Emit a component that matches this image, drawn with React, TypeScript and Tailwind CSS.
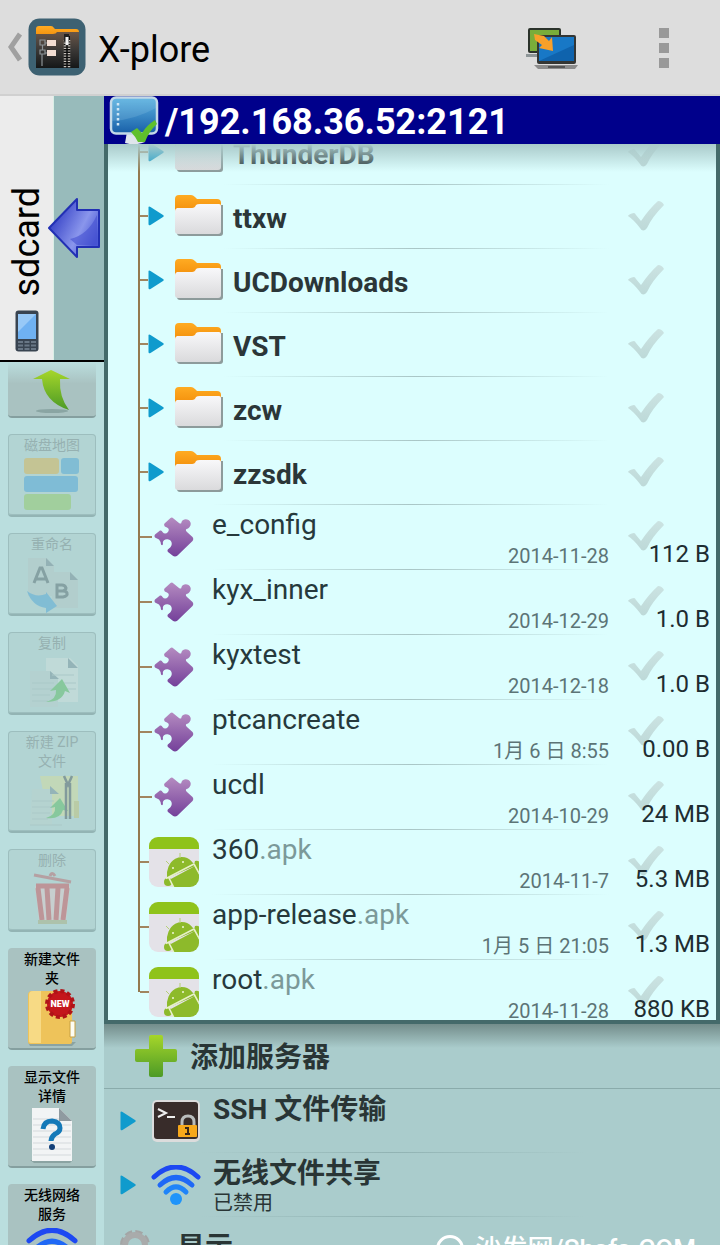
import type { ReactNode } from 'react'

interface Folder {
  name: string
}

interface FileItem {
  name: string
  ext?: string
  date: string
  size: string
}

interface Tool {
  label: string
  icon: ReactNode
  disabled?: boolean
}

const folders: Folder[] = [
  { name: 'ThunderDB' },
  { name: 'ttxw' },
  { name: 'UCDownloads' },
  { name: 'VST' },
  { name: 'zcw' },
  { name: 'zzsdk' },
]

const files: FileItem[] = [
  { name: 'e_config', date: '2014-11-28', size: '112 B' },
  { name: 'kyx_inner', date: '2014-12-29', size: '1.0 B' },
  { name: 'kyxtest', date: '2014-12-18', size: '1.0 B' },
  { name: 'ptcancreate', date: '1月 6 日 8:55', size: '0.00 B' },
  { name: 'ucdl', date: '2014-10-29', size: '24 MB' },
  { name: '360', ext: '.apk', date: '2014-11-7', size: '5.3 MB' },
  { name: 'app-release', ext: '.apk', date: '1月 5 日 21:05', size: '1.3 MB' },
  { name: 'root', ext: '.apk', date: '2014-11-28', size: '880 KB' },
]

/* ---------- icons ---------- */

// gradients shared by the icons that repeat in the lists
const Gradients = () => (
  <svg className="absolute size-0" aria-hidden="true">
    <defs>
      <linearGradient id="orange" x1="0" y1="0" x2="0" y2="1">
        <stop offset="0" stopColor="#ffab22" />
        <stop offset="1" stopColor="#f28d0a" />
      </linearGradient>
      <linearGradient id="paper" x1="0" y1="0" x2="0" y2="1">
        <stop offset="0" stopColor="#f8f8fa" />
        <stop offset="1" stopColor="#dadadc" />
      </linearGradient>
      <linearGradient id="purple" x1="0" y1="0" x2="0" y2="1">
        <stop offset="0" stopColor="#b48bc0" />
        <stop offset="1" stopColor="#74409a" />
      </linearGradient>
      <linearGradient id="lime" x1="0" y1="0" x2="0" y2="1">
        <stop offset="0" stopColor="#a6d62a" />
        <stop offset="1" stopColor="#4c9a26" />
      </linearGradient>
      <linearGradient id="screen" x1="0" y1="0" x2="0" y2="1">
        <stop offset="0" stopColor="#5db4e2" />
        <stop offset="1" stopColor="#185fa8" />
      </linearGradient>
      <linearGradient id="check" x1="0" y1="0" x2="0" y2="1">
        <stop offset="0" stopColor="#cbe3e2" />
        <stop offset="1" stopColor="#bdd9d8" />
      </linearGradient>
    </defs>
  </svg>
)

const AppIcon = () => (
  <svg className="size-[58px]" viewBox="0 0 58 58">
    <defs>
      <linearGradient id="appfolder" x1="0" y1="0" x2="0" y2="1">
        <stop offset="0" stopColor="#6a5648" />
        <stop offset="0.5" stopColor="#3a3836" />
        <stop offset="1" stopColor="#151718" />
      </linearGradient>
    </defs>
    <rect x="0.5" y="0.5" width="57" height="57" rx="11" fill="#3d6172" />
    <path d="M8 17V11q0-3 3-3h12q2 0 3 2l1 1h21q3 0 3 3v5H8z" fill="url(#orange)" />
    <path d="M8 16h17q3 0 4-2h22v36H8z" fill="url(#appfolder)" />
    <rect x="19" y="22" width="9" height="6" fill="#f2ddd2" />
    <rect x="19" y="32" width="9" height="6" fill="#f2ddd2" />
    <path d="M12 22h5v5h-5zM12 32h5v4h-5zM14.500 27v5M14 36v12M17 25h2M17 35h2" fill="none" stroke="#8b9295" strokeWidth="1.200" />
    <path d="M39 18v32" stroke="#0c0c0c" strokeWidth="6" />
    <path d="M37 22v28M41 22v28" stroke="#c9c4be" strokeWidth="2.500" strokeDasharray="1.200 1.400" />
    <path d="M36 16h5v7h-5z" fill="#222" />
    <path d="M37.500 19h3v8h-3z" fill="#f3f3f3" />
  </svg>
)

const SwapScreensIcon = () => (
  <svg className="h-[46px] w-14" viewBox="0 0 56 46">
    <path d="M1 30h20v3H1z" fill="#8e9698" />
    <rect x="3" y="4" width="33" height="25" rx="2" fill="#2b322b" />
    <rect x="5" y="6" width="29" height="21" fill="#79ad3a" />
    <rect x="12" y="11" width="39" height="29" rx="2" fill="#343634" />
    <rect x="14" y="13" width="35" height="24" fill="#1878c6" />
    <path d="M14 37l35-16v16z" fill="#0f63ad" />
    <path d="M9 10l10 2 5 5 3-4 1 14-14-3 3-3-7-5z" fill="#f8a02a" />
    <path d="M9 41h44l-3 4H13z" fill="#8c8c8c" />
    <path d="M23 42h17v2H23z" fill="#555" />
  </svg>
)

const MonitorIcon = () => (
  <svg className="h-12 w-[50px]" viewBox="0 0 50 48">
    <path d="M18 36h15l3 10q-10 4-20 1z" fill="#dfe5ec" />
    <rect x="2" y="1.500" width="46" height="36" rx="5" fill="url(#screen)" stroke="#c3d9e8" strokeWidth="2.500" />
    <path d="M3 25Q25 24 47 12V6q0-3-3-3H6Q3 3 3 6z" fill="#9fd0ec" opacity="0.2" />
    <path d="M9 7v24" stroke="#cfe6f5" strokeWidth="2.500" strokeDasharray="2.500 2.500" />
    <path d="M22 36l6-4 5 5q5-8 13-13l2 4q-8 7-12 18h-7q-3-6-7-10z" fill="#5fc02c" />
  </svg>
)

const SdcardArrow = () => (
  <svg className="h-[62px] w-[54px]" viewBox="0 0 54 62">
    <defs>
      <linearGradient id="back" x1="0" y1="0" x2="1" y2="0.600">
        <stop offset="0" stopColor="#1622b8" />
        <stop offset="0.700" stopColor="#8a96ec" />
        <stop offset="1" stopColor="#4a58d4" />
      </linearGradient>
    </defs>
    <path d="M1 31L29 2v11h22v37H29v10z" fill="url(#back)" stroke="#2230b4" strokeWidth="2" strokeLinejoin="round" />
    <path d="M22 42Q40 38 49 18v30H29z" fill="#4450d0" opacity="0.6" />
  </svg>
)

const PhoneIcon = () => (
  <svg className="h-[42px] w-6" viewBox="0 0 24 42">
    <rect x="0.500" y="0.500" width="23" height="41" rx="3" fill="#394451" />
    <rect x="3" y="4" width="18" height="25" fill="#6fb1f2" />
    <path d="M3 4h18L3 22z" fill="#b4d8fa" opacity="0.6" />
    <path d="M3 32h18M3 35.500h18M3 39h18" stroke="#697786" strokeWidth="2" strokeDasharray="5 1.500" />
  </svg>
)

const FolderIcon = () => (
  <svg className="h-[42px] w-[50px]" viewBox="0 0 50 42">
    <path d="M3 10h46v28q0 3-3 3H6q-3 0-3-3z" fill="#8d9b9b" />
    <path d="M1 18V4q0-4 4-4h12q2 0 4 2l2 2h20q4 0 4 4v10z" fill="url(#orange)" />
    <path d="M1 16q0-2 2-3h15q3 0 4-3 1-1 4-1h19q2 0 2 2v25q0 3-3 3H4q-3 0-3-3z" fill="url(#paper)" />
  </svg>
)

const PuzzleIcon = () => (
  <svg className="size-10" viewBox="0 0 40 40">
    <path
      d="M16.500 1Q18 0 19.500 1.500L25 6Q27.500 7.500 27.500 5C29 1 35 1.500 36.500 5.500C37.500 9 35 11.500 32.500 12Q31 13 33 15L38.500 20Q40 22 38.500 24L23.500 38.500Q21 40.500 18.500 38.500L14 35Q12.500 33 15 31.500C19 29 18.500 23.500 14.500 22.500C11 21.500 8 24 9 27Q8.500 29 7 27.500Q6.500 24 5 22.500L1 20.500Q0 19 1 17.500L6 13.500Q8 13 8.500 15Q11 18 14 15Q16 12 13 10.500Q9 9.500 10.500 6.500Z"
      fill="url(#purple)"
    />
  </svg>
)

const ApkIcon = () => (
  <svg className="size-[50px]" viewBox="0 0 50 50">
    <defs>
      <clipPath id="apk">
        <rect width="50" height="50" rx="9" />
      </clipPath>
    </defs>
    <g clipPath="url(#apk)">
      <rect width="50" height="50" fill="#e4e2e8" />
      <rect width="50" height="12" fill="#8fc31b" />
      <path d="M18 41a15 18 0 0 1 26-15l2 2v1z" fill="#8dba2b" />
      <path d="M20 43l26-14 4 8v13H25z" fill="#8dba2b" />
      <path d="M46 24q4-1 5 2v11l-6-9z" fill="#8dba2b" />
      <circle cx="19" cy="45" r="4" fill="#8dba2b" />
      <path d="M17 41.500L45 27M45 27l6 11M20 41l5 10" stroke="#e6f0c8" strokeWidth="1.600" fill="none" />
      <path d="M31 21v-5M20 27l-3-3" stroke="#b5cf77" strokeWidth="1" />
      <circle cx="24" cy="31" r="1" fill="#eff7d8" />
      <circle cx="34" cy="25" r="1" fill="#eff7d8" />
    </g>
  </svg>
)

const CheckIcon = () => (
  <svg className="h-8 w-[37px]" viewBox="0 0 37 32">
    <path d="M1 16q1-2 6-3 1 0 2 2l5 6Q22 9 31 1q4 0 6 4Q25 17 20 28q-4 5-7 0Q7 20 1 16z" fill="url(#check)" />
  </svg>
)

const Expander = () => (
  <svg className="h-5 w-4" viewBox="0 0 16 20">
    <path d="M0.500 1.500Q0.500 0 2.500 1L15 9q1.500 1 0 2L2.500 19q-2 1-2-1z" fill="#0f9bcd" />
  </svg>
)

const PlusIcon = () => (
  <svg className="size-11" viewBox="0 0 44 44">
    <path d="M15 3q0-2 2-2h10q2 0 2 2v12h12q2 0 2 2v9q0 2-2 2H29v13q0 2-2 2H17q-2 0-2-2V28H3q-2 0-2-2v-9q0-2 2-2h12z" fill="url(#lime)" />
  </svg>
)

const SshIcon = () => (
  <svg className="h-[42px] w-12" viewBox="0 0 48 42">
    <rect width="48" height="42" rx="5" fill="#dcdcdc" />
    <rect x="2" y="2" width="44" height="37" rx="3" fill="#382c2a" />
    <path d="M6 9l8 4-8 4M15 17h8" fill="none" stroke="#eee" strokeWidth="2" />
    <path d="M30 26v-4q0-6 6-6t6 6v4" fill="none" stroke="#b9bcbc" strokeWidth="3" />
    <rect x="26" y="25" width="19" height="12" rx="1" fill="#f7a81b" />
    <path d="M33 28h3v6m-3 0h5" stroke="#39281a" strokeWidth="2" fill="none" />
  </svg>
)

const WifiIcon = ({ className = 'h-10 w-[50px]' }: { className?: string }) => (
  <svg className={className} viewBox="0 0 50 40">
    <g fill="none" strokeLinecap="round">
      <path d="M3 12Q25-8 47 12" stroke="#1d48f2" strokeWidth="5" />
      <path d="M9 20Q25 5 41 20" stroke="#1f68f6" strokeWidth="5" />
      <path d="M15 27Q25 17 35 27" stroke="#1f84f9" strokeWidth="5" />
    </g>
    <circle cx="25" cy="34" r="6" fill="#1f94fa" />
  </svg>
)

const GearIcon = () => (
  <svg className="size-8" viewBox="0 0 32 32">
    <circle cx="16" cy="16" r="13" fill="none" stroke="#a3a5a5" strokeWidth="4" strokeDasharray="7 3.200" />
    <circle cx="16" cy="16" r="10" fill="none" stroke="#a9abab" strokeWidth="6" />
  </svg>
)

const UpIcon = () => (
  <svg className="h-11 w-10" viewBox="0 0 40 44">
    <ellipse cx="20" cy="41" rx="16" ry="2" fill="#8aa5a3" />
    <path d="M19 0L38 9H28q-1 18 9 31Q12 32 10 9H1z" fill="url(#lime)" />
  </svg>
)

const DiskMapIcon = () => (
  <svg className="h-[60px] w-14" viewBox="0 0 56 60">
    <rect x="0" y="3" width="35" height="16" rx="3" fill="#e8a820" />
    <rect x="37" y="3" width="18" height="16" rx="3" fill="#2893d8" />
    <rect x="0" y="21" width="54" height="16" rx="3" fill="#2390dc" />
    <rect x="0" y="39" width="47" height="16" rx="3" fill="#84c63c" />
  </svg>
)

const RenameIcon = () => (
  <svg className="h-[60px] w-14" viewBox="0 0 56 60">
    <path d="M4 4h19l7 8v30H4zM28 18h18l8 8v28H28z" fill="#b4c4c4" />
    <path d="M22 4v8h8zM46 18v8h8z" fill="#5b7380" />
    <path d="M10 29l6-15h2l6 15M12 25h10M33 31v12h6q5-1 4-4-1-2-4-2h-5 5q3-1 3-3-1-3-4-3z" fill="none" stroke="#33434c" strokeWidth="3" />
    <path d="M3 37q9 7 19 3v-2l11 14-11 7v-5Q8 52 3 37z" fill="#2893d8" />
  </svg>
)

const CopyIcon = () => (
  <svg className="h-[60px] w-14" viewBox="0 0 56 60">
    <path d="M22 5h24l8 8v36H22z" fill="#dce6e4" />
    <path d="M6 18h20l8 8v28H6z" fill="#b8cecd" />
    <path d="M44 5v10h10zM26 18v8h9z" fill="#5d7b88" />
    <path d="M8 30h22M8 36h22M8 42h18M8 48h16M28 22h22M40 30h12M40 36h12" stroke="#9db5b4" />
    <path d="M22 49q11-3 10-12l-6 1 12-12 8 14-5-2q-3 11-19 11z" fill="#39b43a" />
  </svg>
)

const ZipIcon = () => (
  <svg className="h-[60px] w-14" viewBox="0 0 56 60">
    <path d="M16 5h38v40H24z" fill="#e2e089" />
    <path d="M8 18h20v36H6z" fill="#bdd2cc" />
    <path d="M26 15v8h9z" fill="#5d7b88" />
    <path d="M8 30h22M8 36h22M8 42h18M8 48h16M6 54h32" stroke="#9db5b4" />
    <path d="M22 47q10-3 9-11l-5 1 10-10 8 13-5-1q-3 10-17 8z" fill="#39b43a" />
    <path d="M40 5l4 9 4-9M42 12v36M46 12v36" fill="none" stroke="#2b3338" strokeWidth="2.500" />
    <path d="M50 30h5v17h-5z" fill="#c7bd55" />
  </svg>
)

const TrashIcon = () => (
  <svg className="h-[60px] w-14" viewBox="0 0 56 60">
    <path d="M10 5l37 7" stroke="#bb4148" strokeWidth="3" />
    <path d="M26 6q2-5 5 0" fill="none" stroke="#bb4148" strokeWidth="3" />
    <path d="M11 16h35l-4 34H15z" fill="#eec7c8" />
    <path d="M12 16h33M14 18l4 32M23 18l2 32M34 18l-2 32M43 18l-4 32" stroke="#d4232e" strokeWidth="5" />
    <path d="M14 50h29v4H14z" fill="#a6a164" />
  </svg>
)

const NewFolderIcon = () => (
  <svg className="h-[60px] w-14" viewBox="0 0 56 60">
    <path d="M4 54h48l-4 4H6z" fill="#8ba3a2" />
    <path d="M4 7q0-4 4-4h28q4 0 4 4l8 12v35q0 2-2 2H6q-2 0-2-2z" fill="#eec35a" />
    <path d="M5 7q0-4 4-4h8v52H8q-3 0-3-2z" fill="#f7da85" />
    <path d="M46 33h5v16h-5z" fill="#fdfdf4" stroke="#c8a043" />
    <circle cx="36" cy="16" r="13" fill="#c4161c" stroke="#b01318" strokeWidth="4" strokeDasharray="4 2.800" />
    <text x="36" y="19" textAnchor="middle" fontSize="9" fontWeight="900" fill="#fff" fontFamily="Roboto, sans-serif">NEW</text>
  </svg>
)

const DetailsIcon = () => (
  <svg className="h-[60px] w-14" viewBox="0 0 56 60">
    <path d="M6 54h43l-3 3H10z" fill="#8ba3a2" />
    <path d="M8 2h27l13 13v40H8z" fill="#f2f4f5" />
    <path d="M9 13h26M9 19h38M9 25h38M9 31h38M9 37h38M9 43h38M9 49h38" stroke="#d4d9dc" />
    <path d="M35 2v13h13z" fill="#8f9aa0" />
    <path d="M19 23q1-8 9-8 8 1 8 7 0 4-5 6-4 3-4 7" fill="none" stroke="#1479b8" strokeWidth="5" />
    <circle cx="28" cy="41" r="3" fill="#123f78" />
  </svg>
)

const tools: Tool[] = [
  { label: '磁盘地图', icon: <DiskMapIcon />, disabled: true },
  { label: '重命名', icon: <RenameIcon />, disabled: true },
  { label: '复制', icon: <CopyIcon />, disabled: true },
  { label: '新建 ZIP 文件', icon: <ZipIcon />, disabled: true },
  { label: '删除', icon: <TrashIcon />, disabled: true },
  { label: '新建文件夹', icon: <NewFolderIcon /> },
  { label: '显示文件详情', icon: <DetailsIcon /> },
  { label: '无线网络服务', icon: <WifiIcon className="mt-1 h-[42px] w-[52px]" /> },
]

/* ---------- parts ---------- */

const Mark = ({ name }: { name: string }) => (
  <label className="ml-[18px] flex cursor-pointer">
    <input type="checkbox" className="sr-only" aria-label={name} />
    <CheckIcon />
  </label>
)

// vertical trunk and the short branch that leads to the row
const Branch = ({ last, branch }: { last?: boolean; branch: string }) => (
  <div className="ml-[30px] flex shrink-0 items-center self-stretch">
    <div className={`w-[2px] bg-[#94794f] ${last ? 'h-1/2 self-start' : 'self-stretch'}`} />
    <div className={`h-[2px] bg-[#a1855f] ${branch}`} />
  </div>
)

const Divider = ({ tone = 'via-[#a9c6c6]' }: { tone?: string }) => (
  <div className={`h-px shrink-0 bg-linear-to-r from-transparent to-transparent ${tone}`} />
)

function FolderRow({ folder }: { folder: Folder }) {
  return (
    <li className="flex h-16 items-center">
      <Branch branch="w-2" />
      <button type="button" aria-label={`Expand ${folder.name}`}>
        <Expander />
      </button>
      <div className="ml-[10px] shrink-0">
        <FolderIcon />
      </div>
      <div className="flex flex-1 flex-col self-stretch">
        <Divider />
        <span className="flex flex-1 items-center pt-1 pl-[9px] text-[28px] font-bold text-[#2b3638]">{folder.name}</span>
      </div>
      <div className="w-[107px] shrink-0">
        <Mark name={folder.name} />
      </div>
    </li>
  )
}

function FileRow({ file, last }: { file: FileItem; last: boolean }) {
  return (
    <li className="flex h-[65px] items-center">
      <Branch last={last} branch={file.ext ? 'w-[9px]' : 'w-3'} />
      <div className={`flex shrink-0 ${file.ext ? 'w-[63px]' : 'w-[60px] pl-[2px]'}`}>{file.ext ? <ApkIcon /> : <PuzzleIcon />}</div>
      <div className="flex flex-1 flex-col self-stretch">
        <Divider />
        <span className="text-[28px] leading-10 text-[#26393c]">
          {file.name}
          {file.ext && <span className="text-[#7b9999]">{file.ext}</span>}
        </span>
        <span className="text-right text-[20px] leading-[22px] text-[#5c7476]">{file.date}</span>
      </div>
      <div className="relative w-[107px] shrink-0 self-stretch pt-4">
        <Mark name={file.name} />
        <span className="absolute right-[6px] bottom-0 text-[24px] leading-[30px] text-[#1e2d31]">{file.size}</span>
      </div>
    </li>
  )
}

function ToolButton({ tool }: { tool: Tool }) {
  return (
    <button
      type="button"
      disabled={tool.disabled}
      className={`flex shrink-0 flex-col items-center rounded-sm border-b-2 px-3 pt-[2px] text-[14px] leading-[19px] ${
        tool.disabled ? 'border-[#93b4b4] bg-[#b2d4d3] ring-1 ring-[#9dbebe] ring-inset' : 'border-[#859f9f] bg-[#a9c2c1] font-medium text-black'
      }`}
    >
      <span className={tool.disabled ? 'text-[#96b1b1]' : ''}>{tool.label}</span>
      <span className={`flex h-[60px] ${tool.disabled ? 'opacity-35' : ''}`}>{tool.icon}</span>
    </button>
  )
}

function Sidebar() {
  return (
    <aside className="flex w-[104px] shrink-0 flex-col bg-[#badede]">
      <button type="button" className="relative flex h-[266px] shrink-0 border-b-2 border-black bg-[#98bbbb]">
        <span className="flex h-full w-[54px] flex-col items-center justify-end border-r border-[#d9efe6] bg-[#ececec] pb-2">
          <span className="rotate-180 text-[36px] leading-8 [writing-mode:vertical-rl]">sdcard</span>
          <span className="mt-[14px]">
            <PhoneIcon />
          </span>
        </span>
        <span className="absolute top-[101px] right-[2px]">
          <SdcardArrow />
        </span>
      </button>
      <div className="flex min-h-0 flex-1 flex-col gap-4 overflow-hidden px-2">
        <button
          type="button"
          aria-label="Up"
          className="flex h-14 shrink-0 items-end justify-center rounded-b-sm border-b-2 border-[#859f9f] bg-linear-to-b from-[#badede] to-[#a9c2c1] to-40% pb-[2px]"
        >
          <UpIcon />
        </button>
        {tools.map((tool) => (
          <ToolButton key={tool.label} tool={tool} />
        ))}
      </div>
    </aside>
  )
}

function ServerRow({ icon, title, note }: { icon: ReactNode; title: string; note?: string }) {
  return (
    <li className="flex h-16 items-center pl-4">
      <button type="button" aria-label={title}>
        <Expander />
      </button>
      <div className="ml-[15px] flex w-[50px] shrink-0 justify-center">{icon}</div>
      <div className="flex flex-1 flex-col self-stretch">
        <span className="pl-3 text-[28px] leading-[41px] font-bold text-[#293535]">{title}</span>
        <span className="flex-1 pl-3 text-[20px] leading-[18px] text-[#293535]">{note}</span>
        <Divider tone="via-[#91b3b3]" />
      </div>
      <div className="w-[136px] shrink-0" />
    </li>
  )
}

export default function App() {
  return (
    <div className="relative flex h-screen flex-col overflow-hidden bg-[#aacccc] font-['Roboto','Noto_Sans_CJK_SC',sans-serif] text-black">
      <Gradients />

      <header className="flex h-24 shrink-0 items-center border-b-2 border-[#d0d0d0] bg-[#dddddd] pl-2">
        <button type="button" aria-label="Back">
          <svg className="h-8 w-5" viewBox="0 0 20 32">
            <path d="M12 3L3 16l9 13" fill="none" stroke="#a0a0a0" strokeWidth="5" />
          </svg>
        </button>
        <AppIcon />
        <h1 className="ml-3 flex-1 pt-[6px] text-[36px] leading-10">X-plore</h1>
        <button type="button" aria-label="Switch pane">
          <SwapScreensIcon />
        </button>
        <button type="button" aria-label="Menu" className="mr-[51px] ml-[78px] flex flex-col gap-[5px] pt-[2px]">
          <span className="size-[10px] bg-[#999]" />
          <span className="size-[10px] bg-[#999]" />
          <span className="size-[10px] bg-[#999]" />
        </button>
      </header>

      <div className="flex min-h-0 flex-1">
        <Sidebar />

        <main className="flex min-w-0 flex-1 flex-col">
          <div className="flex h-12 shrink-0 items-center gap-[6px] bg-[#00008b] pl-[5px] text-[36px] font-bold text-white">
            <MonitorIcon />
            <span className="pt-1 leading-[44px]">/192.168.36.52:2121</span>
          </div>

          {/* File tree */}
          <div className="relative shrink-0 overflow-hidden border-x-4 border-b-4 border-[#446a6a] bg-[#dcfefe]">
            <ul className="-mt-6 -mb-1">
              {folders.map((folder) => (
                <FolderRow key={folder.name} folder={folder} />
              ))}
              {files.map((file, i) => (
                <FileRow key={file.name} file={file} last={i === files.length - 1} />
              ))}
            </ul>
            <div className="pointer-events-none absolute inset-x-0 top-0 h-7 bg-linear-to-b from-[#a9caca] to-transparent" />
          </div>

          {/* Servers */}
          <div className="flex-1 bg-linear-to-b from-[#738d8b] to-[#aacccc] to-[24px]">
            <button type="button" className="flex h-[65px] w-full items-center gap-3 border-b border-[#8aabab] pl-[30px] text-[28px] font-bold text-[#293535]">
              <PlusIcon />
              <span className="pt-1">添加服务器</span>
            </button>
            <ul>
              <ServerRow icon={<SshIcon />} title="SSH 文件传输" />
              <ServerRow icon={<WifiIcon />} title="无线文件共享" note="已禁用" />
              <li className="flex items-start gap-[26px] pt-3 pl-[15px] text-[28px] leading-[38px] font-bold text-[#293535]">
                <GearIcon />
                显示
              </li>
            </ul>
          </div>
        </main>
      </div>

      <div className="absolute right-6 -bottom-5 flex items-center gap-3 text-[26px] leading-8 font-medium text-white">
        <span className="size-7 rounded-full border-3 border-white" />
        沙发网/Shafa.COM
      </div>
    </div>
  )
}
